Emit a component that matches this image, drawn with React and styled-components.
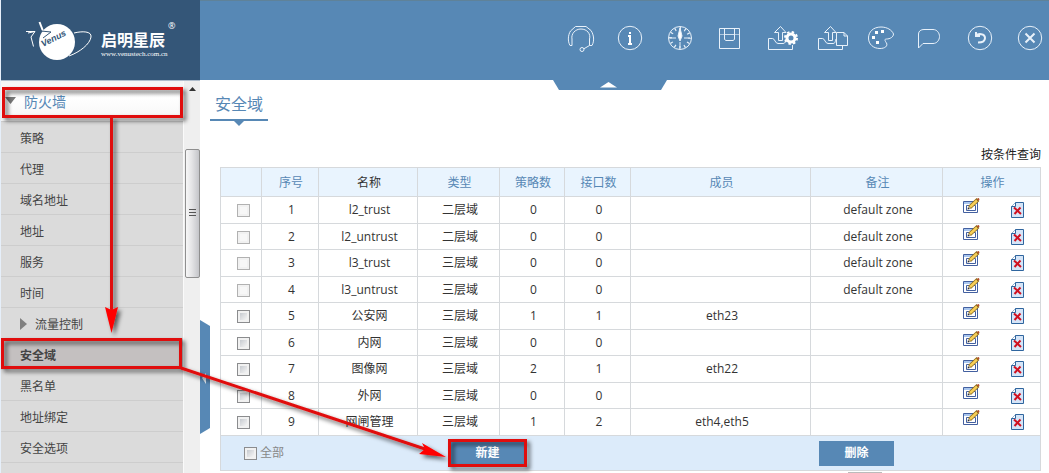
import React from 'react';
import styled, { createGlobalStyle } from 'styled-components';

const GlobalStyle = createGlobalStyle`
    * {
        box-sizing: border-box;
    }

    body {
        margin: 0;
        background: #fff;
        color: #333;
        font-family: "Open Sans", "Noto Sans CJK SC", sans-serif;
        font-size: 12px;
        overflow: hidden;
    }

    button, input {
        font: inherit;
    }
`;

const Page = styled.div`
    position: relative;
    display: flex;
    flex-direction: column;
    min-height: 100vh;
    padding-left: 1px;
    background: linear-gradient(to right, #e6effa 1px, #fff 1px);
`;

const Header = styled.header`
    display: flex;
    height: 80px;
    background: #5788b5;
    box-shadow: inset 0 1px #5f8299;
`;

const Logo = styled.div`
    display: flex;
    width: 199px;
    padding: 20px 0 0 23px;
    background: #345678;
    color: #fff;
`;

const LogoText = styled.div`
    position: relative;
    padding-left: 5px;
`;

const LogoName = styled.div`
    margin-top: 10px;
    font-size: 16px;
    font-weight: 700;
    line-height: 20px;
`;

const LogoUrl = styled.div`
    font-family: "Liberation Serif", serif;
    font-size: 7px;
    line-height: 8px;
`;

const Registered = styled.span`
    position: absolute;
    top: 0;
    right: -8px;
    font-size: 9px;
    line-height: 12px;
`;

const Tools = styled.div`
    position: relative;
    display: flex;
    flex: 1;
    justify-content: flex-end;
    align-items: flex-start;
    gap: 12px;
    padding-top: 23px;
`;

const ToolButton = styled.button`
    display: flex;
    padding: 0;
    border: none;
    background: none;
    cursor: pointer;
`;

const Notch = styled.button`
    position: absolute;
    top: 80px;
    left: 353px;
    z-index: 1;
    padding: 0;
    border: none;
    background: none;
    line-height: 0;
`;

const Body = styled.div`
    display: flex;
    flex: 1;
`;

const Sidebar = styled.aside`
    display: flex;
    width: 199px;
    border-top: 1px solid #aebccb;
`;

const Menu = styled.nav`
    flex: 1;
    background: #dbdbdb;
`;

const MenuHeading = styled.a`
    display: flex;
    align-items: center;
    gap: 8px;
    height: 41px;
    padding-left: 4px;
    background: linear-gradient(#f4f4f4, #fff 40%, #f6f6f6);
    border-bottom: 1px solid #cdcdcd;
    color: #5788b5;
    font-size: 14px;
    text-decoration: none;
`;

const MenuItem = styled.a`
    display: flex;
    align-items: center;
    gap: 8px;
    height: 31px;
    padding: 1px 0 0 19px;
    border-bottom: 1px solid #cdcdcd;
    background: ${props => props.$active ? '#c4c0c0' : 'transparent'};
    color: #444;
    font-weight: ${props => props.$active ? 700 : 400};
    text-decoration: none;
`;

const Scrollbar = styled.div`
    display: flex;
    flex-direction: column;
    align-items: center;
    width: 17px;
    padding-top: 6px;
    background: #efefef;
    border-left: 1px solid #fafafa;
`;

const Thumb = styled.div`
    display: flex;
    align-items: center;
    justify-content: center;
    width: 15px;
    height: 129px;
    margin-top: 58px;
    border: 1px solid #8f8f8f;
    border-radius: 2px;
    background: linear-gradient(to right, #f7f7f7, #e4e4e6 45%, #c4c5c9);
`;

const Main = styled.main`
    position: relative;
    flex: 1;
    min-width: 0;
    padding: 0 8px 0 20px;
`;

const Handle = styled.button`
    position: absolute;
    top: 240px;
    left: 0;
    padding: 0;
    border: none;
    background: none;
    line-height: 0;
`;

const Title = styled.h1`
    position: relative;
    width: 58px;
    height: 41px;
    margin: 0 0 0 -10px;
    padding-top: 12px;
    border-bottom: 2px solid #5788b5;
    color: #5788b5;
    font-size: 16px;
    font-weight: 400;
    line-height: 24px;
    text-align: center;

    &::after {
        content: '';
        position: absolute;
        top: 40px;
        left: 23px;
        border: 6px solid transparent;
        border-bottom: none;
        border-top-color: #5788b5;
    }
`;

const QueryBar = styled.div`
    display: flex;
    justify-content: flex-end;
    padding: 24px 0 2px;
    line-height: 20px;
`;

const QueryLink = styled.a`
    color: #222;
    text-decoration: none;
`;

const Table = styled.table`
    width: 100%;
    table-layout: fixed;
    border-collapse: collapse;
    text-align: center;
    line-height: 18px;

    th, td {
        padding: 0;
        border: 1px solid #d6d9dc;
    }
`;

const Th = styled.th`
    && {
        padding: 2px 0 0 2px;
    }

    height: 29px;
    background: #e9f4fe;
    color: ${props => props.$plain ? '#333' : '#5788b5'};
    font-weight: 400;
`;

const Row = styled.tr`
    height: 27px;

    &:nth-child(even) {
        height: 26px;
    }
`;

const Col = styled.col`
    width: ${props => props.$width ? `${props.$width}px` : 'auto'};
`;

const Cell = styled.td`
    && {
        padding-left: 3px;
    }
`;

const CheckCell = styled.td`
    line-height: 16px;
`;

const ActionCell = styled.td`
    vertical-align: top;
`;

const Checkbox = styled.input`
    display: inline-block;
    width: 13px;
    height: 13px;
    margin: 0 0 0 4px;
    appearance: none;
    vertical-align: middle;
    border: 1px solid #8b8c8e;
    background: linear-gradient(135deg, #b9bec5, #f4f4f4 80%);
    box-shadow: inset 0 0 0 2px #f1f1f1;

    &:disabled {
        border-color: #b1b1b1;
        background: #f7f7f7;
    }
`;

const Actions = styled.div`
    display: flex;
    gap: 31px;
    padding: 1px 0 0 20px;
`;

const IconButton = styled.button`
    display: flex;
    padding: 0;
    border: none;
    background: none;
    cursor: pointer;
`;

const Footer = styled.div`
    display: grid;
    grid-template-columns: 229px 369px auto;
    align-items: center;
    height: 34px;
    background: #dcebfa;
`;

const SelectAll = styled.label`
    display: flex;
    align-items: center;
    gap: 3px;
    padding-left: 19px;
    color: #888;
`;

const Button = styled.button`
    width: 75px;
    height: 25px;
    padding: 0;
    border: none;
    background: #5788b5;
    color: #fff;
    font-weight: 700;
    cursor: pointer;
`;

const Pager = styled.div`
    width: 34px;
    height: 20px;
    margin: 1px 0 -20px 628px;
    border: 1px solid #bbb;
`;

const Annotations = styled.svg`
    position: absolute;
    top: 0;
    left: 0;
    z-index: 2;
    pointer-events: none;
`;

const TrayArrow = () => (
    <>
        <path d="M-7.5 0.500H-11.500V11.500H12.500V7" />
        <path d="M-7.500 0.500C-5 0.500 -5 5.500 -2 5.500H3C6 5.500 5 2 6 1" />
        <path d="M-1.500 2.500V-5.500H-5.500L0.500 -11.500L6 -5.500H2.500V2.500Z" />
    </>
);

const tools = [
    {
        label: '客服',
        icon: (
            <g transform="translate(1 0)">
                <path d="M-9 7.500H-11C-13.500 3 -13 -3 -10.500 -7L-5.500 -11.500H5L10 -7.500C13 -3 13.500 3 11 7.500H8.500" />
                <path d="M-9 7.500V1C-10 -4 -6 -9 0 -9S10 -4 8.500 1V7.500L2.500 11" />
                <circle cx="1" cy="11.500" r="2" />
            </g>
        ),
    },
    {
        label: '信息',
        icon: (
            <>
                <circle r="11.700" />
                <path stroke="#fff" strokeWidth="2" d="M0 -6V-4M-2 -2H0V6M-2 6H2" />
            </>
        ),
    },
    {
        label: '仪表',
        icon: (
            <>
                <circle r="11.500" />
                <circle
                    r="9.500"
                    strokeWidth="3"
                    strokeDasharray="1.200 3.775"
                    strokeDashoffset="0.600"
                />
                <path d="M-10 0H-4M4 0H10M0 4V10" />
                <path fill="#fff" d="M0 -10L2 -2L0 3L-2 -2Z" />
            </>
        ),
    },
    {
        label: '保存',
        icon: (
            <>
                <path d="M-10.500 -9.500H9.500V10.500H-10.500ZM-5.500 -9.500V1.500L-4 2.500H3L4.500 1.500V-9.500" />
                <path opacity="0.600" d="M-10.500 -3.500H9.500M-5 -3.500H4" />
            </>
        ),
    },
    {
        label: '导出配置',
        icon: (
            <>
                <TrayArrow />
                <circle cx="11" cy="0" r="4" fill="#5788b5" stroke="#fff" strokeWidth="3" />
                <circle cx="11" cy="0" r="6" stroke="#fff" strokeWidth="2" strokeDasharray="2.400 2.312" />
            </>
        ),
    },
    {
        label: '导出文件',
        icon: (
            <>
                <TrayArrow />
                <path fill="#5788b5" d="M6.500 -5.500H14L17.500 -2V7.500H6.500ZM14 -5.500V-2H17.500" />
            </>
        ),
    },
    {
        label: '换肤',
        icon: (
            <g transform="translate(1 0)">
                <path d="M0 -11C-8 -11 -12.500 -6 -12.500 0S-8 10.500 -1 10.500C4 10.500 7 8 5.500 5C4 3 3 1 5.500 1C9 1 12.500 -1 12.500 -4C11 -8 6 -11 0 -11Z" />
                <path fill="#fff" stroke="none" d="M-6 -7h3v3h-3zM0 -8h3v3h-3zM-9 -2h3v3h-3zM-5 3h3v3h-3z" />
            </g>
        ),
    },
    {
        label: '消息',
        icon: (
            <path
                d="M-11.500 10V-4C-11.500 -7 -9 -8.500 -6 -8.500H3C7 -8.500 9.500 -5 9.500 -1.500S7 5.500 3 5.500H-7Z"
            />
        ),
    },
    {
        label: '返回',
        icon: (
            <>
                <circle r="11.700" />
                <path strokeWidth="2" d="M-4 -6V-2H0M-4 -2C-2 -5 5 -4.500 5 0C5 3 3 4.500 -2 4.500" />
            </>
        ),
    },
    {
        label: '退出',
        icon: (
            <>
                <circle r="11.700" />
                <path strokeWidth="2" d="M-4.500 -4.500L4.500 4.500M4.500 -4.500L-4.500 4.500" />
            </>
        ),
    },
];

const menuItems = [
    { text: '策略' },
    { text: '代理' },
    { text: '域名地址' },
    { text: '地址' },
    { text: '服务' },
    { text: '时间' },
    { text: '流量控制', expandable: true },
    { text: '安全域', active: true },
    { text: '黑名单' },
    { text: '地址绑定' },
    { text: '安全选项' },
];

const columns = [
    { title: '', width: 41 },
    { title: '序号', width: 57 },
    { title: '名称', width: 99, plain: true },
    { title: '类型', width: 82 },
    { title: '策略数', width: 65 },
    { title: '接口数', width: 66 },
    { title: '成员' },
    { title: '备注', width: 132 },
    { title: '操作', width: 98 },
];

const zones = [
    { id: 1, name: 'l2_trust', type: '二层域', policies: 0, ports: 0, members: '', note: 'default zone' },
    { id: 2, name: 'l2_untrust', type: '二层域', policies: 0, ports: 0, members: '', note: 'default zone' },
    { id: 3, name: 'l3_trust', type: '三层域', policies: 0, ports: 0, members: '', note: 'default zone' },
    { id: 4, name: 'l3_untrust', type: '三层域', policies: 0, ports: 0, members: '', note: 'default zone' },
    { id: 5, name: '公安网', type: '三层域', policies: 1, ports: 1, members: 'eth23', note: '' },
    { id: 6, name: '内网', type: '三层域', policies: 0, ports: 0, members: '', note: '' },
    { id: 7, name: '图像网', type: '三层域', policies: 2, ports: 1, members: 'eth22', note: '' },
    { id: 8, name: '外网', type: '三层域', policies: 0, ports: 0, members: '', note: '' },
    { id: 9, name: '网闸管理', type: '三层域', policies: 1, ports: 2, members: 'eth4,eth5', note: '' },
];

const LogoMark = () => (
    <svg width="72" height="42" viewBox="24 20 72 42" fill="none" stroke="#fff">
        <path d="M74 33C82 31 92 31 91 37C90 44 80 52 69 56" strokeWidth="1" />
        <path d="M26 31.500H35L31 37L33.500 46.500M35 31.500L28 33" strokeWidth="1" />
        <path d="M39.500 22L43 31" strokeWidth="2" />
        <circle cx="57" cy="42" r="18" fill="#fff" stroke="none" />
        <path d="M41 31L51 32L43 38" stroke="#345678" strokeWidth="1" />
        <text
            x="43"
            y="47"
            transform="rotate(-27 43 47)"
            fill="#345678"
            stroke="none"
            fontFamily="Liberation Sans, sans-serif"
            fontSize="9"
            fontStyle="italic"
            fontWeight="700"
        >
            Venus
        </text>
    </svg>
);

const EditIcon = () => (
    <svg width="17" height="20" viewBox="0 0 17 20" fill="none">
        <path fill="#fff" stroke="#4360a0" d="M0.500 3.500H14.500V14.500H0.500Z" />
        <path stroke="#a9c6ee" d="M1 4.500H14M1 5.500H14" />
        <path stroke="#4360a0" d="M3.500 7.500H12.500V12.500H3.500Z" />
        <path stroke="#8a6a1c" strokeWidth="4" d="M6.500 9.500L15 1.500" />
        <path stroke="#f7cf58" strokeWidth="2.400" d="M7 9L14 2.500" />
        <path stroke="#b5502a" strokeWidth="2" d="M14.500 2L16 0.500" />
        <path fill="#333" d="M4.500 11.500L5 9L7 11Z" />
    </svg>
);

const DeleteIcon = () => (
    <svg width="13" height="20" viewBox="0 0 13 20" fill="none">
        <path fill="#d5e5f8" stroke="#2f659e" d="M4.500 4.500H12.500V19.500H0.500V8.500Z" />
        <path fill="#fff" stroke="#2f659e" d="M4.500 4.500V8.500H0.500" />
        <path stroke="#d01020" strokeWidth="2" d="M3 9.500L10 16M9.500 9.500L3.500 16" />
    </svg>
);

const ZoneRow = ({ zone }) => (
    <Row>
        <CheckCell>
            <Checkbox type="checkbox" aria-label={zone.name} disabled={zone.id < 5} />
        </CheckCell>
        <Cell>{zone.id}</Cell>
        <Cell>{zone.name}</Cell>
        <Cell>{zone.type}</Cell>
        <Cell>{zone.policies}</Cell>
        <Cell>{zone.ports}</Cell>
        <Cell>{zone.members}</Cell>
        <Cell>{zone.note}</Cell>
        <ActionCell>
            <Actions>
                <IconButton aria-label="编辑"><EditIcon /></IconButton>
                <IconButton aria-label="删除"><DeleteIcon /></IconButton>
            </Actions>
        </ActionCell>
    </Row>
);

// Red guide marks: firewall menu -> zone item -> create button
const Guide = () => (
    <Annotations width="540" height="473" viewBox="0 0 540 473" aria-hidden="true">
        <defs>
            <filter id="guideShadow" filterUnits="userSpaceOnUse" x="0" y="0" width="540" height="473">
                <feDropShadow dx="3" dy="3" stdDeviation="2" floodColor="#000" floodOpacity="0.600" />
            </filter>
        </defs>
        <g fill="none" stroke="#e01010" strokeWidth="3" filter="url(#guideShadow)">
            <rect x="3.500" y="88.500" width="178" height="28" />
            <rect x="2.500" y="339.500" width="178" height="28" />
            <rect x="449.500" y="440.500" width="76" height="25" />
            <path d="M111.500 118V312M181 368L428 450" />
            <path fill="#f00" stroke="none" d="M105 307L111.500 310L118 307L111.500 333ZM422 443L446 457L419 454L425 449Z" />
        </g>
    </Annotations>
);

const App = () => (
    <Page>
        <GlobalStyle />
        <Header>
            <Logo>
                <LogoMark />
                <LogoText>
                    <LogoName>启明星辰</LogoName>
                    <LogoUrl>www.venustech.com.cn</LogoUrl>
                    <Registered>®</Registered>
                </LogoText>
            </Logo>
            <Tools>
                {tools.map(tool => (
                    <ToolButton key={tool.label} aria-label={tool.label}>
                        <svg width="38" height="30" viewBox="-19 -15 38 30" fill="none" stroke="#e8f1fa">
                            {tool.icon}
                        </svg>
                    </ToolButton>
                ))}
                <Notch aria-label="收起">
                    <svg width="114" height="10" viewBox="0 0 114 10">
                        <path fill="#5788b5" d="M0 0H114L108 10H6Z" />
                        <path fill="#fff" d="M47 7.500L55.500 2L64 7.500Z" />
                    </svg>
                </Notch>
            </Tools>
        </Header>
        <Body>
            <Sidebar>
                <Menu>
                    <MenuHeading href="#firewall">
                        <svg width="11" height="8" viewBox="0 0 11 8">
                            <path fill="#777" d="M0 0H11L5.500 7Z" />
                        </svg>
                        防火墙
                    </MenuHeading>
                    {menuItems.map(item => (
                        <MenuItem key={item.text} href={`#${item.text}`} $active={item.active}>
                            {item.expandable && (
                                <svg width="7" height="12" viewBox="0 0 7 12">
                                    <path fill="#808080" d="M0 0L7 6L0 12Z" />
                                </svg>
                            )}
                            {item.text}
                        </MenuItem>
                    ))}
                </Menu>
                <Scrollbar aria-hidden="true">
                    <svg width="7" height="4" viewBox="0 0 7 4">
                        <path fill="#333" d="M0 4L3.500 0L7 4Z" />
                    </svg>
                    <Thumb>
                        <svg width="7" height="9" viewBox="0 0 7 9">
                            <path stroke="#555" d="M0 0.500H7M0 3.500H7M0 6.500H7" />
                        </svg>
                    </Thumb>
                </Scrollbar>
            </Sidebar>
            <Main>
                <Handle aria-label="收起菜单">
                    <svg width="10" height="114" viewBox="0 0 10 114">
                        <path fill="#5788b5" d="M0 0L10 6V108L0 114Z" />
                        <path fill="#e4ecf4" d="M6 53V64L2 58Z" />
                    </svg>
                </Handle>
                <Title>安全域</Title>
                <QueryBar>
                    <QueryLink href="#query">按条件查询</QueryLink>
                </QueryBar>
                <Table>
                    <colgroup>
                        {columns.map(column => (
                            <Col key={column.title} $width={column.width} />
                        ))}
                    </colgroup>
                    <thead>
                        <tr>
                            {columns.map(column => (
                                <Th key={column.title} $plain={column.plain}>{column.title}</Th>
                            ))}
                        </tr>
                    </thead>
                    <tbody>
                        {zones.map(zone => <ZoneRow key={zone.id} zone={zone} />)}
                    </tbody>
                    <tfoot>
                        <tr>
                            <td colSpan={9}>
                                <Footer>
                                    <SelectAll>
                                        <Checkbox type="checkbox" />
                                        全部
                                    </SelectAll>
                                    <Button>新建</Button>
                                    <Button>删除</Button>
                                </Footer>
                            </td>
                        </tr>
                    </tfoot>
                </Table>
                <Pager />
            </Main>
        </Body>
        <Guide />
    </Page>
);

export default App;
